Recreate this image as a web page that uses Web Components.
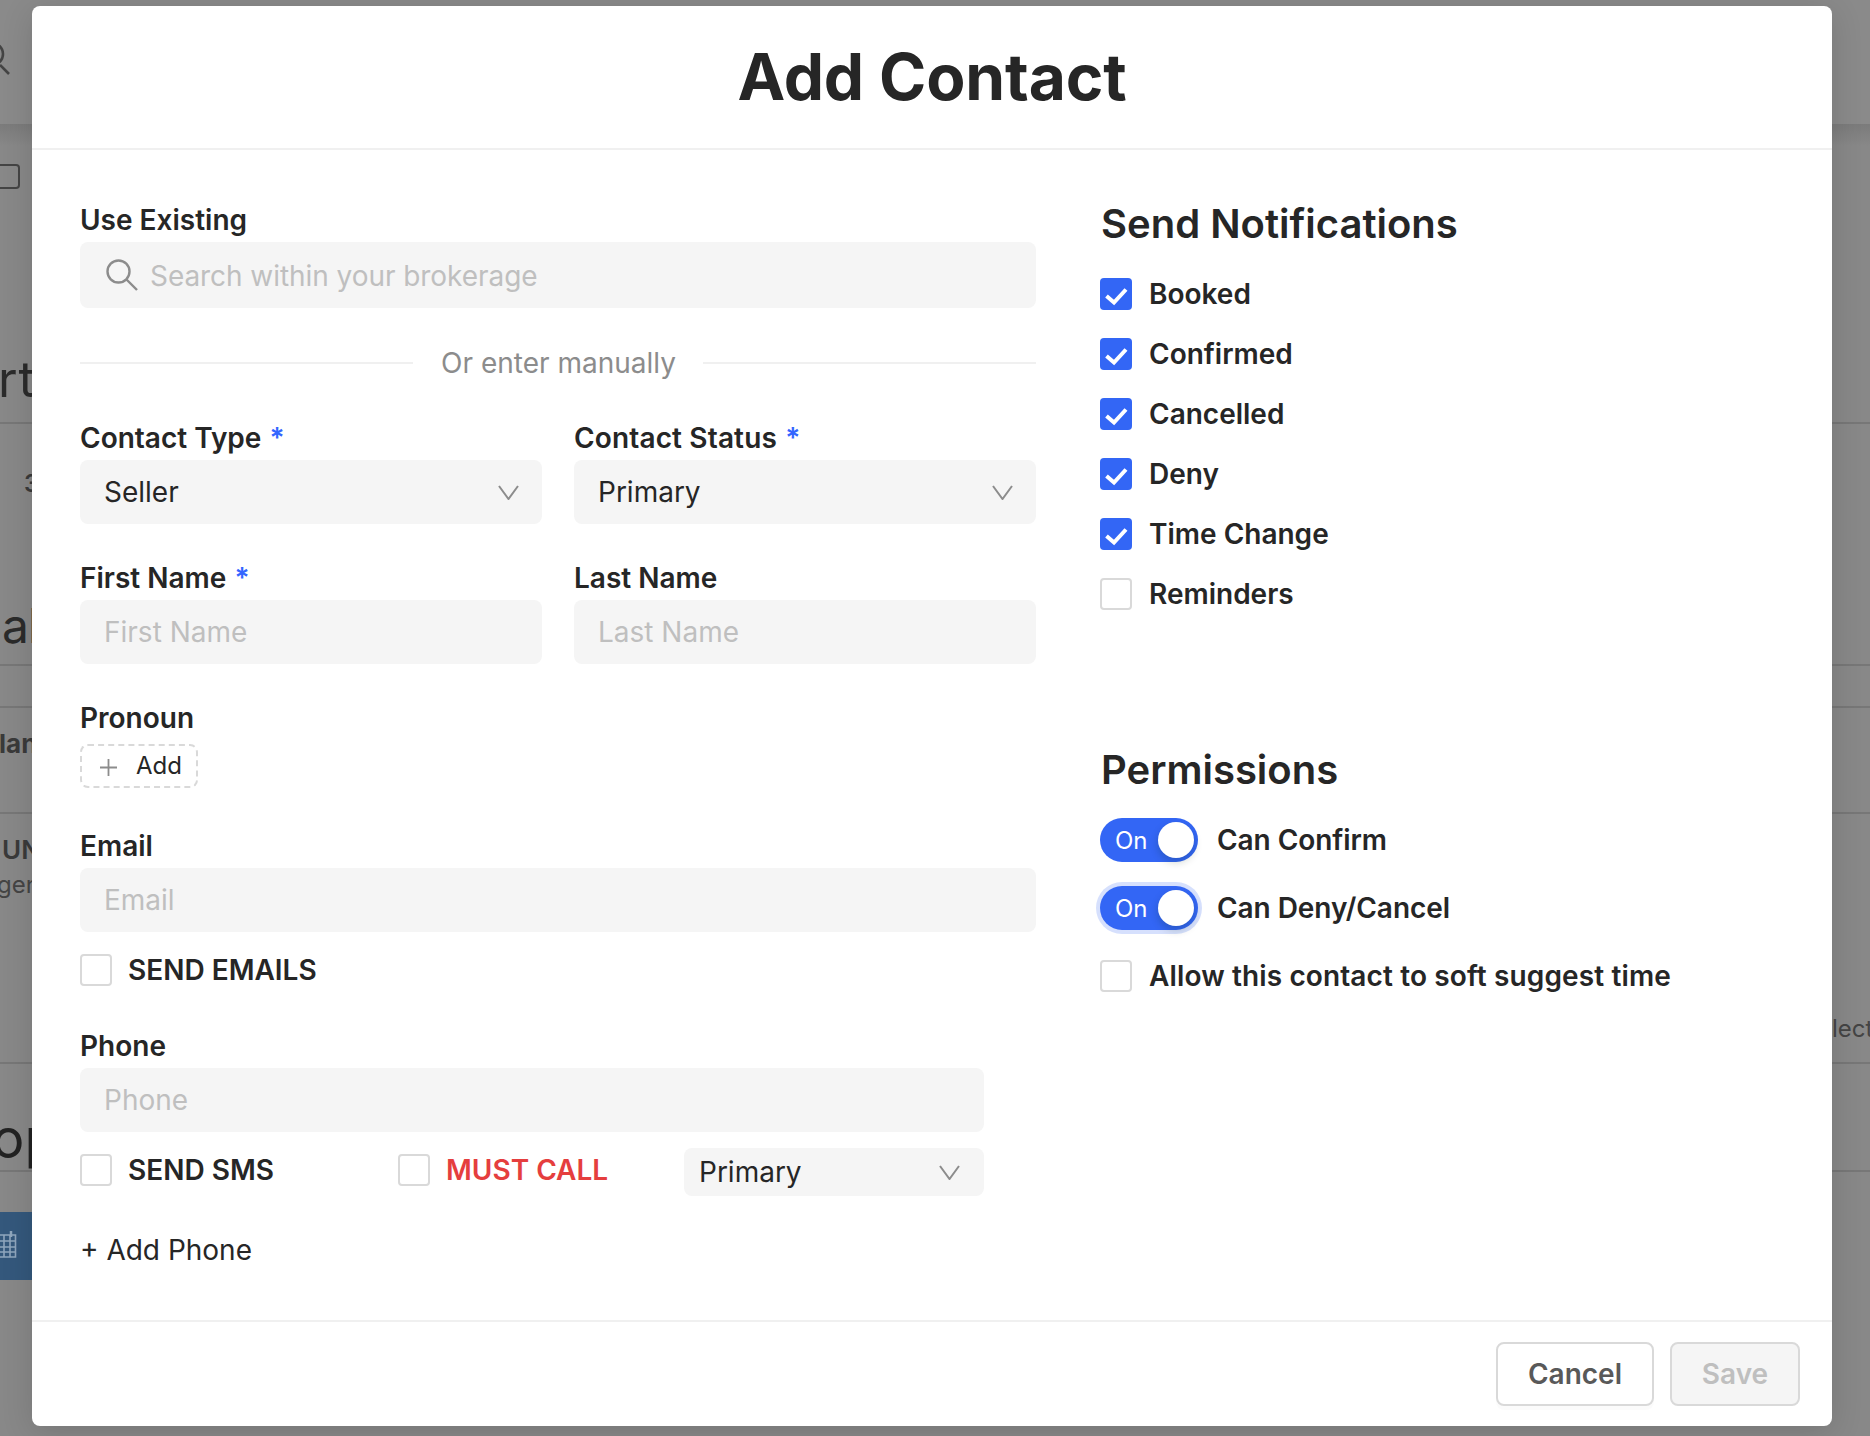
<!DOCTYPE html>
<html lang="en"><head><meta charset="utf-8"><title>Add Contact</title>
<style>
html,body{margin:0;padding:0;background:#888;}
body{font-family:Inter,"Liberation Sans",sans-serif;width:1870px;height:1436px;overflow:hidden;position:relative;color:#262626;}
</style></head><body>
<x-backdrop></x-backdrop>
<x-modal heading="Add Contact">
  <x-col slot="left">
    <x-field label="Use Existing" style="margin-bottom:37px"><x-input placeholder="Search within your brokerage" search></x-input></x-field>
    <x-divider style="margin-bottom:39px">Or enter manually</x-divider>
    <x-pair style="margin-bottom:36px">
      <x-field label="Contact Type" required><x-input value="Seller" select></x-input></x-field>
      <x-field label="Contact Status" required wide><x-input value="Primary" select></x-input></x-field>
    </x-pair>
    <x-pair style="margin-bottom:36px">
      <x-field label="First Name" required><x-input placeholder="First Name"></x-input></x-field>
      <x-field label="Last Name"><x-input placeholder="Last Name"></x-input></x-field>
    </x-pair>
    <x-field label="Pronoun" gap="8" style="margin-bottom:40px"><x-add>Add</x-add></x-field>
    <x-field label="Email" style="margin-bottom:22px"><x-input placeholder="Email"></x-input></x-field>
    <x-check style="margin-bottom:42px">SEND EMAILS</x-check>
    <x-field label="Phone" style="width:904px;margin-bottom:16px"><x-input placeholder="Phone"></x-input></x-field>
    <x-phone-row style="margin-bottom:36px">
      <x-check style="width:318px">SEND SMS</x-check>
      <x-check danger style="width:286px">MUST CALL</x-check>
      <x-input value="Primary" select small></x-input>
    </x-phone-row>
    <x-link>+ Add Phone</x-link>
  </x-col>
  <x-col slot="right">
    <x-section-title style="margin-bottom:30px">Send Notifications</x-section-title>
    <x-check wide checked style="margin-bottom:28px">Booked</x-check>
    <x-check wide checked style="margin-bottom:28px">Confirmed</x-check>
    <x-check wide checked style="margin-bottom:28px">Cancelled</x-check>
    <x-check wide checked style="margin-bottom:28px">Deny</x-check>
    <x-check wide checked style="margin-bottom:28px">Time Change</x-check>
    <x-check wide style="margin-bottom:136px">Reminders</x-check>
    <x-section-title style="margin-bottom:24px">Permissions</x-section-title>
    <x-toggle style="margin-bottom:24px">Can Confirm</x-toggle>
    <x-toggle focused style="margin-bottom:30px">Can Deny/Cancel</x-toggle>
    <x-check wide style="letter-spacing:.12px">Allow this contact to soft suggest time</x-check>
  </x-col>
  <x-btn slot="footer">Cancel</x-btn>
  <x-btn slot="footer" disabled>Save</x-btn>
</x-modal>
<script>
function def(name, css, html){
  customElements.define(name, class extends HTMLElement{
    connectedCallback(){
      if(this.shadowRoot) return;
      const r=this.attachShadow({mode:'open'});
      const a=n=>this.getAttribute(n), h=n=>this.hasAttribute(n);
      r.innerHTML='<style>'+css+'</style>'+(typeof html==='function'?html(a,h):html);
    }
  });
}
const chev='<svg width="21" height="15" viewBox="0 0 21 15" fill="none"><path d="M1 1L10.5 14L20 1" stroke="#8c8c8c" stroke-width="2"/></svg>';

def('x-backdrop',`
:host{display:flex;flex-direction:column;width:1870px;height:1436px;background:#888;color:#2e2e2e;overflow:hidden}
.r{display:flex;justify-content:space-between;box-sizing:border-box;border-bottom:2px solid #777;position:relative}
.txt{display:block;white-space:nowrap}
.head{height:124px;border:0;background:#8a8a8a;padding-top:36px}
.a{height:300px;display:block;padding-top:40px;background:linear-gradient(#7b7b7b,#888 22px,#888)}
.box{width:20px;height:25px;box-sizing:border-box;border:2px solid #444;border-left:0;border-radius:0 4px 4px 0}
.rt{font-size:50px;line-height:60px;margin-top:160px;color:#2b2b2b;margin-left:-2px;letter-spacing:1px}
.b{height:242px;display:block;padding-top:45px}
.three{font-size:24px;line-height:30px;font-weight:600;color:#3a3a3a;margin-left:24px}
.al{font-size:48px;line-height:60px;margin-top:97px;color:#2b2b2b;margin-left:2px;letter-spacing:-1px}
.c{height:42px}
.d{height:106px;display:block;padding-top:20px}
.lan{font-size:26px;line-height:32px;font-weight:700;color:#3a3a3a;margin-left:-1px}
.e{height:250px;display:flex;padding-top:20px}
.un{font-size:26px;line-height:32px;font-weight:600;color:#3a3a3a;margin-left:2px}
.gen{font-size:24px;line-height:30px;color:#444;margin-top:4px;margin-left:-3px}
.lect{font-size:24px;line-height:30px;color:#444;margin-top:180px;width:38px;overflow:hidden}
.f{height:108px;display:block;padding-top:42px}
.op{font-size:54px;line-height:66px;color:#222;margin-left:-8px}
.blue{margin-top:40px;height:68px;background:#34587c;display:flex;align-items:center;width:240px}
.blue svg{margin-top:-4px}
`,`
<div class="r head"><svg width="12" height="40" viewBox="0 0 12 40" fill="none"><circle cx="-8" cy="18" r="11" stroke="#444" stroke-width="2.6"/><path d="M0 29L9 38" stroke="#444" stroke-width="2.6"/></svg></div>
<div class="r a"><div class="box"></div><span class="txt rt">rt</span></div>
<div class="r b"><span class="txt three">3</span><span class="txt al">al</span></div>
<div class="r c"></div>
<div class="r d"><span class="txt lan">lan</span></div>
<div class="r e"><div><span class="txt un">UN</span><span class="txt gen">gen</span></div><span class="txt lect">lect</span></div>
<div class="r f"><span class="txt op">op</span></div>
<div class="blue"><svg width="17" height="28" viewBox="0 0 17 28" fill="none" stroke="#8fa6bd" stroke-width="1.6"><path d="M-2 5H15.5V27H-2M-2 11H15.5M-2 17H15.5M-2 22H15.5M4 5V27M10 5V27"/><path d="M11 1V7" stroke-width="2.5"/></svg></div>
`);

def('x-modal',`
:host{position:absolute;left:32px;top:6px;width:1800px;height:1420px;background:#fff;border-radius:8px;display:flex;flex-direction:column;box-shadow:0 6px 32px rgba(0,0,0,.14);overflow:hidden;font-family:Inter,"Liberation Sans",sans-serif}
header{height:144px;box-sizing:border-box;padding-bottom:1px;border-bottom:2px solid #f0f0f0;display:flex;align-items:center;justify-content:center;font-size:64px;font-weight:700;letter-spacing:-.15px;color:#262626;flex:none}
main{flex:1;display:grid;grid-template-columns:956px 1fr;column-gap:64px;padding:50px 48px 0;min-height:0}
footer{border-top:2px solid #f0f0f0;flex:none;display:flex;justify-content:flex-end;gap:16px;padding:20px 32px 0;box-sizing:border-box;height:106px}
.l{display:block;padding-top:2px}
`,(a)=>`<header>${a('heading')}</header><main><div class="l"><slot name="left"></slot></div><div><slot name="right"></slot></div></main><footer><slot name="footer"></slot></footer>`);

def('x-col',`:host{display:flex;flex-direction:column;align-items:stretch}`,`<slot></slot>`);

def('x-field',`
:host{display:block;min-width:0}
label{display:block;font-size:28px;font-weight:600;line-height:36px;color:#262626;white-space:nowrap}
:host([wide]) label{letter-spacing:.15px}
.s{color:#3366ff;margin-left:1px}
`,(a,h)=>`<label style="margin-bottom:${a('gap')||4}px">${a('label')}${h('required')?' <span class="s">*</span>':''}</label><slot></slot>`);

def('x-input',`
:host{display:flex;align-items:center;height:64px;box-sizing:border-box;background:#f5f5f5;border-radius:8px;padding:0 23px 0 24px;font-size:28px;line-height:36px;white-space:nowrap;color:#262626}
:host([search]){height:66px;padding-left:26px;padding-top:2px;letter-spacing:-.06px}
:host([small]){height:48px;width:300px;padding:0 24px 0 15px;flex:none;margin-top:-6px}
.ph{color:#bfbfbf}
.v{flex:1}
svg.sr{margin:-2px 12px 0 0;flex:none}
`,(a,h)=>`${h('search')?'<svg class="sr" width="32" height="32" viewBox="0 0 32 32" fill="none" stroke="#8c8c8c" stroke-width="2.4"><circle cx="12.5" cy="12.5" r="11"/><path d="M20.5 20.5L31 31"/></svg>':''}<span class="v ${h('placeholder')?'ph':''}">${a('value')||a('placeholder')}</span>${h('select')?chev:''}`);

def('x-divider',`
:host{display:flex;align-items:center;height:36px;font-size:28px;line-height:36px;color:#8c8c8c;white-space:nowrap}
i{flex:1;height:2px;background:#f0f0f0}
span{margin:0 27px 0 28px}
`,`<i></i><span><slot></slot></span><i></i>`);

def('x-pair',`:host{display:grid;grid-template-columns:462px 462px;column-gap:32px}`,`<slot></slot>`);

def('x-add',`
:host{display:inline-flex;align-items:center;width:118px;height:44px;box-sizing:border-box;border:2px dashed #d9d9d9;border-radius:8px;padding-left:18px;font-size:24px;line-height:32px;color:#262626}
span{margin-left:19px}
`,`<svg width="17" height="17" viewBox="0 0 17 17" stroke="#8c8c8c" stroke-width="1.8" style="margin-top:2px"><path d="M8.5 0V17M0 8.5H17"/></svg><span><slot></slot></span>`);

def('x-check',`
:host{display:flex;align-items:center;height:32px;font-size:28px;font-weight:600;line-height:32px;color:#262626;white-space:nowrap;flex:none}
:host([danger]){color:#e53e3e}
b{display:block;width:32px;height:32px;box-sizing:border-box;border:2px solid #d9d9d9;border-radius:4px;margin-right:16px;flex:none;background:#fff}
:host([wide]) b{margin-right:17px}
b.on{background:#3366f5;border:0}
svg{display:block}
`,(a,h)=>`<b class="${h('checked')?'on':''}">${h('checked')?'<svg width="32" height="32" viewBox="0 0 32 32" fill="none"><path d="M6.5 18L14 24.5L26 11.5" stroke="#fff" stroke-width="4"/></svg>':''}</b><slot></slot>`);

def('x-phone-row',`:host{display:flex;align-items:flex-start;width:904px;padding-top:6px}`,`<slot></slot>`);

def('x-link',`:host{display:block;font-size:28px;line-height:36px;color:#262626}`,`<slot></slot>`);

def('x-section-title',`:host{display:block;font-size:40px;font-weight:600;line-height:48px;color:#262626;white-space:nowrap;padding-left:1px}`,`<slot></slot>`);

def('x-toggle',`
:host{display:flex;align-items:center;height:44px;font-size:28px;font-weight:600;color:#262626;white-space:nowrap;letter-spacing:-.06px}
.t{width:98px;height:44px;border-radius:22px;background:#3366f5;display:flex;align-items:center;justify-content:space-between;padding:0 4px 0 15px;box-sizing:border-box;margin-right:19px;color:#fff;font-size:24px;font-weight:400;flex:none}
:host([focused]) .t{box-shadow:0 0 0 4px rgba(51,102,245,.2)}
.k{width:36px;height:36px;border-radius:50%;background:#fff;box-shadow:0 4px 8px rgba(0,35,11,.2)}
`,`<div class="t"><span>On</span><div class="k"></div></div><slot></slot>`);

def('x-btn',`
:host{display:flex;align-items:center;justify-content:center;height:64px;box-sizing:border-box;border:2px solid #d9d9d9;border-radius:8px;background:#fff;color:#595959;font-size:28px;font-weight:600;width:158px;box-shadow:0 4px 0 rgba(0,0,0,.015)}
:host([disabled]){background:#f5f5f5;color:#bfbfbf;width:130px;box-shadow:none}
`,`<slot></slot>`);
</script>
</body></html>
